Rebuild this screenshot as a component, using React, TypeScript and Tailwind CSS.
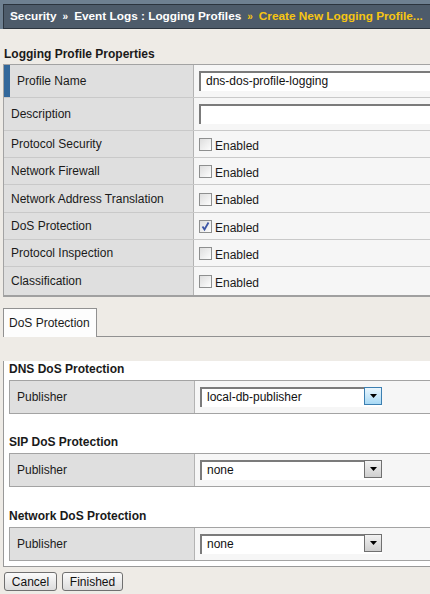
import React from 'react';

const font = "font-['Liberation_Sans',Arial,sans-serif]";

function Checkbox({ checked = false }: { checked?: boolean }) {
    return (
        <span className="relative inline-block w-[13px] h-[13px] border border-[#8e8f8f] bg-gradient-to-br from-[#dedede] to-[#fdfdfd] shrink-0">
            {checked && (
                <svg viewBox="0 0 13 13" className="absolute -left-px -top-px w-[13px] h-[13px]">
                    <path d="M3.5 6.5 L5.5 9.5 L9.5 2.5" fill="none" stroke="#3c55a5" strokeWidth="1.8" />
                </svg>
            )}
        </span>
    );
}

function Select({ value, focused = false }: { value: string; focused?: boolean }) {
    return (
        <div className="flex h-[20px] w-[182px] bg-white border-t-2 border-l-2 border-[#7b7b7b]">
            <span className="flex-1 pl-[5px] leading-[17px] text-[#111]">{value}</span>
            <span
                className={`w-[18px] h-[18px] -mt-[2px] flex items-center justify-center border ${
                    focused
                        ? 'border-[#3c7fb1] bg-gradient-to-b from-[#eaf6fd] to-[#a7d9f5]'
                        : 'border-[#707070] bg-gradient-to-b from-[#f2f2f2] to-[#cfcfcf]'
                }`}
            >
                <svg viewBox="0 0 7 4" className="w-[7px] h-[4px]">
                    <path d="M0 0 H7 L3.5 4 Z" fill="#000" />
                </svg>
            </span>
        </div>
    );
}

const rows: { label: string; h: string; kind: 'input' | 'check'; value?: string; checked?: boolean; mark?: boolean }[] = [
    { label: 'Profile Name', h: 'h-[33px]', kind: 'input', value: 'dns-dos-profile-logging', mark: true },
    { label: 'Description', h: 'h-[33px]', kind: 'input', value: '' },
    { label: 'Protocol Security', h: 'h-[27px]', kind: 'check' },
    { label: 'Network Firewall', h: 'h-[27px]', kind: 'check' },
    { label: 'Network Address Translation', h: 'h-[28px]', kind: 'check' },
    { label: 'DoS Protection', h: 'h-[27px]', kind: 'check', checked: true },
    { label: 'Protocol Inspection', h: 'h-[27px]', kind: 'check' },
    { label: 'Classification', h: 'h-[28px]', kind: 'check' },
];

const publishers = [
    { title: 'DNS DoS Protection', value: 'local-db-publisher', focused: true, top: 'mt-[24px]' },
    { title: 'SIP DoS Protection', value: 'none', focused: false, top: 'mt-[20px]' },
    { title: 'Network DoS Protection', value: 'none', focused: false, top: 'mt-[21px]' },
];

export default function App() {
    return (
        <div className={`${font} text-[12px] text-[#1a1a1a] w-[430px] h-[594px] overflow-hidden bg-[#eeebe6]`}>
            {/* Breadcrumb */}
            <div className="bg-[#6e8091] pt-[4px] pl-[3px]">
                <div className="h-[25px] w-[470px] bg-[#4d5b6a] border border-[#2b343e] flex items-center pl-[6px] font-bold text-white whitespace-nowrap text-[11.8px]">
                    <span>Security</span>
                    <span className="mx-[6px] text-[10px]">»</span>
                    <span>Event Logs : Logging Profiles</span>
                    <span className="mx-[6px] text-[10px] text-[#f7c512]">»</span>
                    <span className="text-[#f7c512]">Create New Logging Profile...</span>
                </div>
            </div>

            <div className="mt-[17px] h-[16px] leading-[16px] pl-[4px] font-bold">Logging Profile Properties</div>

            {/* Properties table */}
            <div className="mt-[2px] ml-[3px] w-[470px] border-t border-l border-[#a3a3a3] border-b-2 border-b-[#a0a0a0]">
                {rows.map((r, i) => (
                    <div
                        key={r.label}
                        className={`flex ${r.h} ${i < rows.length - 1 ? 'border-b border-[#c9c9c9]' : ''}`}
                    >
                        <div className="w-[190px] shrink-0 flex bg-[#dfdfdf] border-r border-[#b3b3b3]">
                            {r.mark && <div className="w-[6px] bg-[#33689b]" />}
                            <div className="flex items-center pl-[7px]">{r.label}</div>
                        </div>
                        <div className="flex-1 flex items-center bg-[#f6f6f6] pl-[5px]">
                            {r.kind === 'input' ? (
                                <div className="h-[20px] w-[260px] bg-white border-t-2 border-l-2 border-[#7b7b7b] pl-[5px] leading-[17px] text-[#111]">
                                    {r.value}
                                </div>
                            ) : (
                                <div className="flex items-center gap-[3px] pt-[1px]">
                                    <Checkbox checked={r.checked} />
                                    <span className="mt-[2px]">Enabled</span>
                                </div>
                            )}
                        </div>
                    </div>
                ))}
            </div>

            {/* Tab panel */}
            <div className="mt-[11px] ml-[3px] w-[470px]">
                <div className="flex">
                    <div className="h-[29px] w-[94px] bg-[#fdfdfd] border-t border-l border-r border-[#919191] pl-[5px] flex items-center">
                        DoS Protection
                    </div>
                    <div className="flex-1 border-b border-[#919191]" />
                </div>
                <div className="bg-white border-l border-b border-[#999] pb-[5px] pl-[5px]">
                    {publishers.map((p) => (
                        <div key={p.title}>
                            <div className={`${p.top} mb-[3px] h-[16px] leading-[16px] font-bold`}>{p.title}</div>
                            <div className="flex h-[34px] border-t border-b border-l border-[#a3a3a3]">
                                <div className="w-[185px] shrink-0 bg-[#dfdfdf] border-r border-[#b3b3b3] flex items-center pl-[7px]">
                                    Publisher
                                </div>
                                <div className="flex-1 bg-[#f6f6f6] flex items-center pl-[5px] pb-[1px]">
                                    <Select value={p.value} focused={p.focused} />
                                </div>
                            </div>
                        </div>
                    ))}
                </div>
            </div>

            {/* Buttons */}
            <div className="mt-[5px] ml-[4px] flex gap-[5px]">
                <button className="h-[19px] w-[53px] rounded-[3px] border border-[#707070] bg-gradient-to-b from-[#fbfbfb] to-[#dcdcdc] text-[#111] leading-[16px]">
                    Cancel
                </button>
                <button className="h-[19px] w-[61px] rounded-[3px] border border-[#707070] bg-gradient-to-b from-[#fbfbfb] to-[#dcdcdc] text-[#111] leading-[16px]">
                    Finished
                </button>
            </div>
        </div>
    );
}
